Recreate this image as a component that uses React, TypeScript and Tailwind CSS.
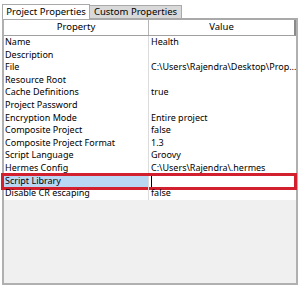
import React from "react";

const rows: [string, string][] = [
  ["Name", "Health"],
  ["Description", ""],
  ["File", "C:\\Users\\Rajendra\\Desktop\\Prop..."],
  ["Resource Root", ""],
  ["Cache Definitions", "true"],
  ["Project Password", ""],
  ["Encryption Mode", "Entire project"],
  ["Composite Project", "false"],
  ["Composite Project Format", "1.3"],
  ["Script Language", "Groovy"],
  ["Hermes Config", "C:\\Users\\Rajendra\\.hermes"],
  ["Script Library", ""],
  ["Disable CR escaping", "false"],
];

export default function App() {
  return (
    <div
      className="w-[300px] h-[285px] bg-white text-[9px] text-black flex flex-col pl-[2px] pr-[2px]"
      style={{ fontFamily: '"Noto Sans", "Open Sans", sans-serif' }}
    >
      {/* tabs */}
      <div className="flex items-end h-[18px] shrink-0">
        <div className="h-[15px] w-[88px] bg-white border border-b-0 border-[#a9a9a9] flex items-center justify-center relative top-[1px] text-[9.5px]">
          Project Properties
        </div>
        <div className="h-[13px] w-[92px] bg-[#d9d9d9] border border-l-0 border-b-0 border-[#a9a9a9] flex items-center justify-center text-[9.5px]">
          Custom Properties
        </div>
      </div>

      {/* panel */}
      <div className="flex-1 border-2 border-[#b0b0b0] border-t-[#a9a9a9] bg-[#f0f0f0] flex flex-col">
        <div className="flex h-[16px] bg-white border-b border-[#a0a0a0] border-r-2 border-r-[#8a8a8a] shrink-0 text-[9.5px]">
          <div className="w-[145px] border-r border-[#b5b5b5] flex items-center justify-center">Property</div>
          <div className="flex-1 flex items-center justify-center">Value</div>
        </div>
        <div className="bg-white flex flex-col">
          {rows.map(([k, v]) => {
            const sel = k === "Script Library";
            return (
              <div key={k} className="flex h-[12.6px] leading-[12px] relative">
                <div
                  className={
                    "w-[145px] pl-[1px] border-r border-[#dcdcdc] whitespace-nowrap overflow-hidden " +
                    (sel ? "bg-[#b9d7f3]" : "")
                  }
                >
                  {k}
                </div>
                <div className="flex-1 pl-[2px] whitespace-nowrap overflow-hidden">
                  {sel ? <span className="inline-block w-[1px] h-[11px] bg-black align-middle" /> : v}
                </div>
                {sel && (
                  <div className="absolute left-[-3px] right-[-1px] top-[-2px] bottom-[-3px] border-[3px] border-[#d2202e] pointer-events-none" />
                )}
              </div>
            );
          })}
        </div>
      </div>
    </div>
  );
}
